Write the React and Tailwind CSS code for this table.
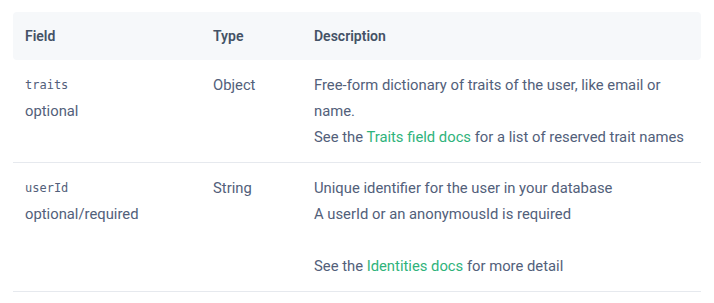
const rows = [
  {
    name: "traits",
    req: "optional",
    type: "Object",
    desc: (
      <>
        <p>Free-form dictionary of traits of the user, like email or name.</p>
        <p>
          See the <a className="text-[#2fb37b]">Traits field docs</a> for a list of reserved trait names
        </p>
      </>
    ),
  },
  {
    name: "userId",
    req: "optional/required",
    type: "String",
    desc: (
      <>
        <p>Unique identifier for the user in your database</p>
        <p>A userId or an anonymousId is required</p>
        <p>&nbsp;</p>
        <p>
          See the <a className="text-[#2fb37b]">Identities docs</a> for more detail
        </p>
      </>
    ),
  },
]

export default function App() {
  return (
    <div className="w-[714px] h-[303px] bg-white px-[13px] pt-[12px] text-[#52607a] font-['Roboto',sans-serif] text-[14.8px] leading-[26px]">
      <div className="flex h-[48px] items-center rounded bg-[#f6f8fa] text-[14px] font-semibold text-[#445266]">
        <div className="w-[188px] pl-[12px]">Field</div>
        <div className="w-[101px] pl-[12px]">Type</div>
        <div className="flex-1 pl-[12px]">Description</div>
      </div>
      {rows.map((row) => (
        <div key={row.name} className="flex border-b border-[#e6e9ee] py-[12px]">
          <div className="w-[188px] pl-[12px]">
            <div className="font-['DejaVu_Sans_Mono',monospace] text-[12px]">{row.name}</div>
            <div>{row.req}</div>
          </div>
          <div className="w-[101px] pl-[12px]">{row.type}</div>
          <div className="flex-1 pl-[12px] pr-[8px]">{row.desc}</div>
        </div>
      ))}
    </div>
  )
}
